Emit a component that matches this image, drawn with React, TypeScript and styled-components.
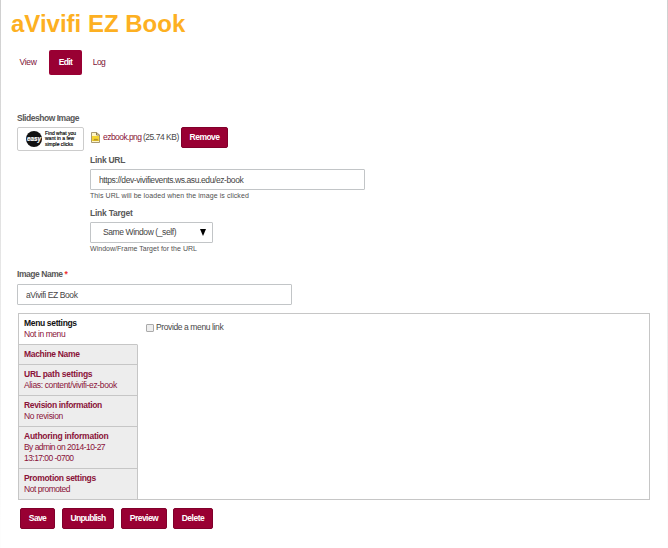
import React from "react";
import styled, { createGlobalStyle } from "styled-components";

const maroon = "#990033";

const GlobalStyle = createGlobalStyle`
  * { box-sizing: border-box; }
  body { margin: 0; background: #fff; font-family: "Liberation Sans", Arial, sans-serif; }
`;

const Page = styled.main`
  position: relative;
  width: 668px;
  height: 548px;
  padding: 9px 18px 0 17px;
  overflow: hidden;
  color: #484848;
  font-size: 8.5px;
  line-height: 11px;
  white-space: nowrap;
`;

const Edge = styled.i<{ $side: "left" | "right" }>`
  position: absolute;
  top: 0;
  bottom: 0;
  ${(p) => p.$side}: 0;
  width: 1px;
  background: linear-gradient(#cfcfcf, #d8d8d8 20%, #fdfdfd 95%);
`;

const Title = styled.h1`
  margin: 0 0 0 -6px;
  height: 30px;
  font-size: 24px;
  line-height: 30px;
  color: #fdb022;
`;

const Tabs = styled.nav`
  display: flex;
  align-items: center;
  margin-top: 11px;
  height: 25px;
`;

const Tab = styled.a<{ $active?: boolean; $width: number; $spacing: number }>`
  width: ${(p) => p.$width}px;
  height: 25px;
  margin-left: ${(p) => (p.$active ? 10 : 0)}px;
  line-height: 25px;
  text-align: center;
  border-radius: 2px;
  color: ${(p) => (p.$active ? "#fff" : "#7d1238")};
  background: ${(p) => (p.$active ? maroon : "transparent")};
  font-weight: ${(p) => (p.$active ? 700 : 400)};
  letter-spacing: ${(p) => p.$spacing}px;
`;

const Label = styled.label<{ $spacing: number }>`
  display: block;
  height: 11px;
  font-weight: 700;
  color: #585858;
  letter-spacing: ${(p) => p.$spacing}px;
`;

const Required = styled.span`
  color: #e33;
`;

const SlideshowField = styled.section`
  margin-top: 38px;
`;

const ImageRow = styled.div`
  display: flex;
  align-items: flex-start;
  margin-top: 3px;
`;

const Thumb = styled.div`
  display: flex;
  align-items: center;
  width: 67px;
  height: 24px;
  margin-right: 6px;
  padding-left: 7px;
  border: 1px solid #ccc;
  border-radius: 2px;
`;

const ThumbText = styled.div`
  margin-left: 2px;
  font-size: 5px;
  line-height: 5.4px;
  color: #000;
  -webkit-text-stroke: 0.15px #000;
`;

const ImageDetails = styled.div`
  flex: 1;
`;

const FileRow = styled.div`
  display: flex;
  align-items: center;
  height: 21px;
`;

const FileLink = styled.a`
  width: 38px;
  margin-left: 3px;
  color: #8a1238;
  letter-spacing: -0.55px;
`;

const FileSize = styled.span`
  width: 38px;
  margin-left: 2px;
  letter-spacing: -0.48px;
`;

const Button = styled.button<{ $width: number; $spacing: number }>`
  width: ${(p) => p.$width}px;
  height: 21px;
  padding: 0;
  border: 1px solid #80002b;
  border-radius: 2px;
  background: ${maroon};
  color: #fff;
  font: 700 8.5px/19px "Liberation Sans", Arial, sans-serif;
  letter-spacing: ${(p) => p.$spacing}px;
  white-space: nowrap;
`;

const TextInput = styled.input`
  display: block;
  width: 275px;
  height: 21px;
  padding: 0 8px;
  border: 1px solid #c2c5c7;
  border-radius: 1px;
  background: #fff;
  color: #444;
  font: 8.5px "Liberation Sans", Arial, sans-serif;
  letter-spacing: -0.4px;
`;

const Select = styled.div`
  display: flex;
  align-items: center;
  justify-content: space-between;
  width: 123px;
  height: 21px;
  padding: 0 6px 0 12px;
  border: 1px solid #c2c5c7;
  border-radius: 1px;
  color: #444;
  letter-spacing: -0.4px;
`;

const Help = styled.div<{ $spacing: number }>`
  height: 9px;
  font-size: 7px;
  line-height: 9px;
  color: #505050;
  letter-spacing: ${(p) => p.$spacing}px;
`;

const Field = styled.div<{ $top: number; $gap: number }>`
  margin-top: ${(p) => p.$top}px;
  & > ${Label} { margin-bottom: ${(p) => p.$gap}px; }
  & > ${Help} { margin-top: 1px; }
`;

const Settings = styled.section`
  display: flex;
  width: 632px;
  height: 187px;
  margin: 8px 0 0 1px;
  border: 1px solid #c6c6c6;
`;

const SettingsTabs = styled.ul`
  width: 119px;
  margin: 0;
  padding: 0;
  list-style: none;
`;

const SettingsTab = styled.li<{ $active?: boolean; $height: number }>`
  height: ${(p) => p.$height}px;
  padding: 4px 0 0 5px;
  border-bottom: 1px solid #c6c6c6;
  border-right: 1px solid ${(p) => (p.$active ? "#fff" : "#c6c6c6")};
  background: ${(p) => (p.$active ? "#fff" : "#ededed")};
  color: #8a1238;
  &:last-child { border-bottom: 0; }
`;

const TabTitle = styled.strong<{ $active?: boolean; $spacing: number }>`
  display: block;
  color: ${(p) => (p.$active ? "#111" : "#8a1238")};
  letter-spacing: ${(p) => p.$spacing}px;
`;

const TabSummary = styled.span<{ $spacing: number }>`
  display: block;
  white-space: pre-line;
  letter-spacing: ${(p) => p.$spacing}px;
`;

const CheckRow = styled.label`
  display: flex;
  align-items: center;
  gap: 2px;
  height: 11px;
  margin: 8px 0 0 8px;
  letter-spacing: -0.39px;
`;

const Checkbox = styled.span`
  width: 8px;
  height: 8px;
  border: 1px solid #aaa;
  border-radius: 1px;
  background: #eee;
`;

const Actions = styled.div`
  display: flex;
  margin: 8px 0 0 3px;
  & > :nth-child(2) { margin: 0 7px; }
  & > :nth-child(4) { margin-left: 6px; }
`;

const settings = [
  { title: "Menu settings", summary: "Not in menu", height: 31, ts: -0.34, ss: -0.42 },
  { title: "Machine Name", summary: "", height: 20, ts: -0.33, ss: 0 },
  { title: "URL path settings", summary: "Alias: content/vivifi-ez-book", height: 31, ts: -0.25, ss: -0.35 },
  { title: "Revision information", summary: "No revision", height: 31, ts: -0.33, ss: -0.32 },
  { title: "Authoring information", summary: "By admin on 2014-10-27\n13:17:00 -0700", height: 42, ts: -0.25, ss: -0.55 },
  { title: "Promotion settings", summary: "Not promoted", height: 30, ts: -0.31, ss: -0.46 },
];

const EasyLogo = () => (
  <svg width="18" height="18" viewBox="0 0 18 18">
    <circle cx="9" cy="9" r="8" fill="#111" />
    <text x="9" y="11" textAnchor="middle" fontSize="6.5" fontWeight="700" fontStyle="italic" letterSpacing="0" fill="#fff" stroke="#fff" strokeWidth="0.2" textLength="14" lengthAdjust="spacingAndGlyphs">easy</text>
  </svg>
);

const FileIcon = () => (
  <svg width="10" height="11" viewBox="0 0 10 11">
    <path d="M1.5.5h5l3 2.5v7.5h-8z" fill="#fff6c8" stroke="#a99a72" />
    <path d="M6.5.5V3h3" fill="none" stroke="#8a7a50" />
    <path d="M2 4h7v5H2z" fill="#f5d432" />
    <path d="M3 8.5l2-2 1 1 1-1 1.500 2z" fill="#b08c22" />
  </svg>
);

export default function App() {
  return (
    <Page>
      <GlobalStyle />
      <Edge $side="left" />
      <Edge $side="right" />
      <Title>aVivifi EZ Book</Title>
      <Tabs>
        <Tab $width={22} $spacing={-0.3}>View</Tab>
        <Tab $active $width={33} $spacing={-0.6}>Edit</Tab>
        <Tab $width={34} $spacing={-0.5}>Log</Tab>
      </Tabs>
      <SlideshowField>
        <Label $spacing={-0.47}>Slideshow Image</Label>
        <ImageRow>
          <Thumb>
            <EasyLogo />
            <ThumbText>Find what you<br />want in a few<br />simple clicks</ThumbText>
          </Thumb>
          <ImageDetails>
            <FileRow>
              <FileIcon />
              <FileLink>ezbook.png</FileLink>
              <FileSize>(25.74 KB)</FileSize>
              <Button $width={47} $spacing={-0.55}>Remove</Button>
            </FileRow>
            <Field $top={7} $gap={3}>
              <Label $spacing={-0.27}>Link URL</Label>
              <TextInput defaultValue="https://dev-vivifievents.ws.asu.edu/ez-book" />
              <Help $spacing={0.08}>This URL will be loaded when the image is clicked</Help>
            </Field>
            <Field $top={8} $gap={3}>
              <Label $spacing={-0.24}>Link Target</Label>
              <Select>
                <span>Same Window (_self)</span>
                <svg width="6" height="7" viewBox="0 0 6 7"><path d="M0 0h6L3 7z" fill="#000" /></svg>
              </Select>
              <Help $spacing={0.03}>Window/Frame Target for the URL</Help>
            </Field>
          </ImageDetails>
        </ImageRow>
      </SlideshowField>
      <Field $top={16} $gap={4}>
        <Label $spacing={-0.45}>Image Name <Required>*</Required></Label>
        <TextInput defaultValue="aVivifi EZ Book" />
      </Field>
      <Settings>
        <SettingsTabs>
          {settings.map((s, i) => (
            <SettingsTab key={s.title} $height={s.height} $active={i === 0}>
              <TabTitle $active={i === 0} $spacing={s.ts}>{s.title}</TabTitle>
              <TabSummary $spacing={s.ss}>{s.summary}</TabSummary>
            </SettingsTab>
          ))}
        </SettingsTabs>
        <CheckRow><Checkbox />Provide a menu link</CheckRow>
      </Settings>
      <Actions>
        <Button $width={35} $spacing={-0.65}>Save</Button>
        <Button $width={52} $spacing={-0.75}>Unpublish</Button>
        <Button $width={46} $spacing={-0.55}>Preview</Button>
        <Button $width={40} $spacing={-0.5}>Delete</Button>
      </Actions>
    </Page>
  );
}
